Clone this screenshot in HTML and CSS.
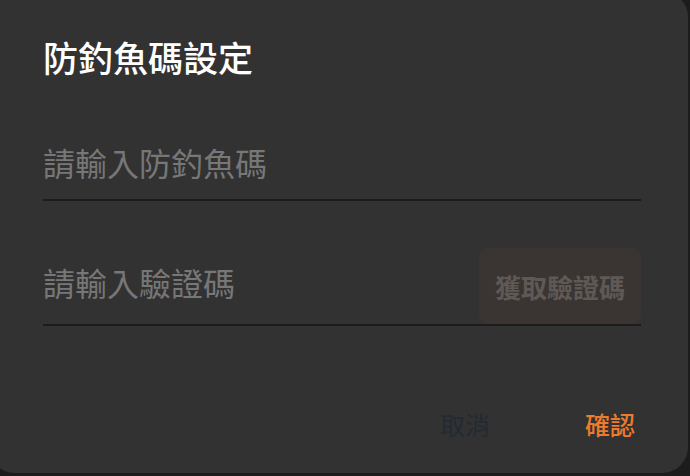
FILE: index.html
```html
<!DOCTYPE html>
<html lang="zh-Hant">
<head>
  <meta charset="UTF-8">
  <meta name="viewport" content="width=device-width, initial-scale=1.0">
  <title>防釣魚碼設定</title>
  <link rel="stylesheet" href="styles.css">
</head>
<body>
  <div class="dialogo">
    <h1>防釣魚碼設定</h1>

    <div class="campo campo-codigo">
      <input type="text" placeholder="請輸入防釣魚碼">
    </div>

    <div class="campo campo-verificacion">
      <input type="text" placeholder="請輸入驗證碼">
      <button class="obtener">獲取驗證碼</button>
    </div>

    <div class="acciones">
      <button class="cancelar">取消</button>
      <button class="confirmar">確認</button>
    </div>
  </div>
</body>
</html>
```

FILE: styles.css
```css
body {
  margin: 0;
  padding: 0;
  height: 476px;
  overflow: hidden;
  background: radial-gradient(circle at 0 0, #b8621f 0, #8a4a18 14px, #1c1c1c 15px);
  font-family: 'Noto Sans CJK TC', 'Noto Sans', sans-serif;
}
.dialogo {
  box-sizing: border-box;
  width: 699px;
  height: 482px;
  margin: -9px 0 0 -11px;
  padding: 46px 47px 0 54px;
  background-color: #323232;
  border-radius: 26px;
  display: flex;
  flex-direction: column;
}
h1 {
  margin: 0;
  font-size: 35px;
  line-height: 40px;
  font-weight: 500;
  color: #ffffff;
}
.campo {
  display: flex;
  align-items: center;
  border-bottom: 2px solid #1c1c1c;
}
.campo-codigo {
  height: 66px;
  margin-top: 56px;
}
.campo-verificacion {
  margin-top: 47px;
}
input {
  flex: 1;
  min-width: 0;
  padding: 0 0 8px;
  border: none;
  background: transparent;
  font-family: inherit;
  font-size: 32px;
  line-height: 40px;
  color: #dddddd;
  outline: none;
}
input::placeholder {
  color: #777777;
}
.obtener {
  height: 76px;
  padding: 0 16px;
  border: none;
  border-radius: 10px;
  background-color: #3a3532;
  color: #5f5955;
  font-family: inherit;
  font-size: 26px;
  font-weight: 700;
}
.acciones {
  margin-top: auto;
  margin-bottom: 34px;
  margin-right: 6px;
  display: flex;
  justify-content: flex-end;
  gap: 95px;
}
.acciones button {
  padding: 0;
  border: none;
  background: none;
  font-family: inherit;
  font-size: 25px;
  line-height: 30px;
}
.cancelar {
  color: #222b34;
  font-weight: 400;
}
.confirmar {
  color: #ec7b2d;
  font-weight: 500;
}
```
